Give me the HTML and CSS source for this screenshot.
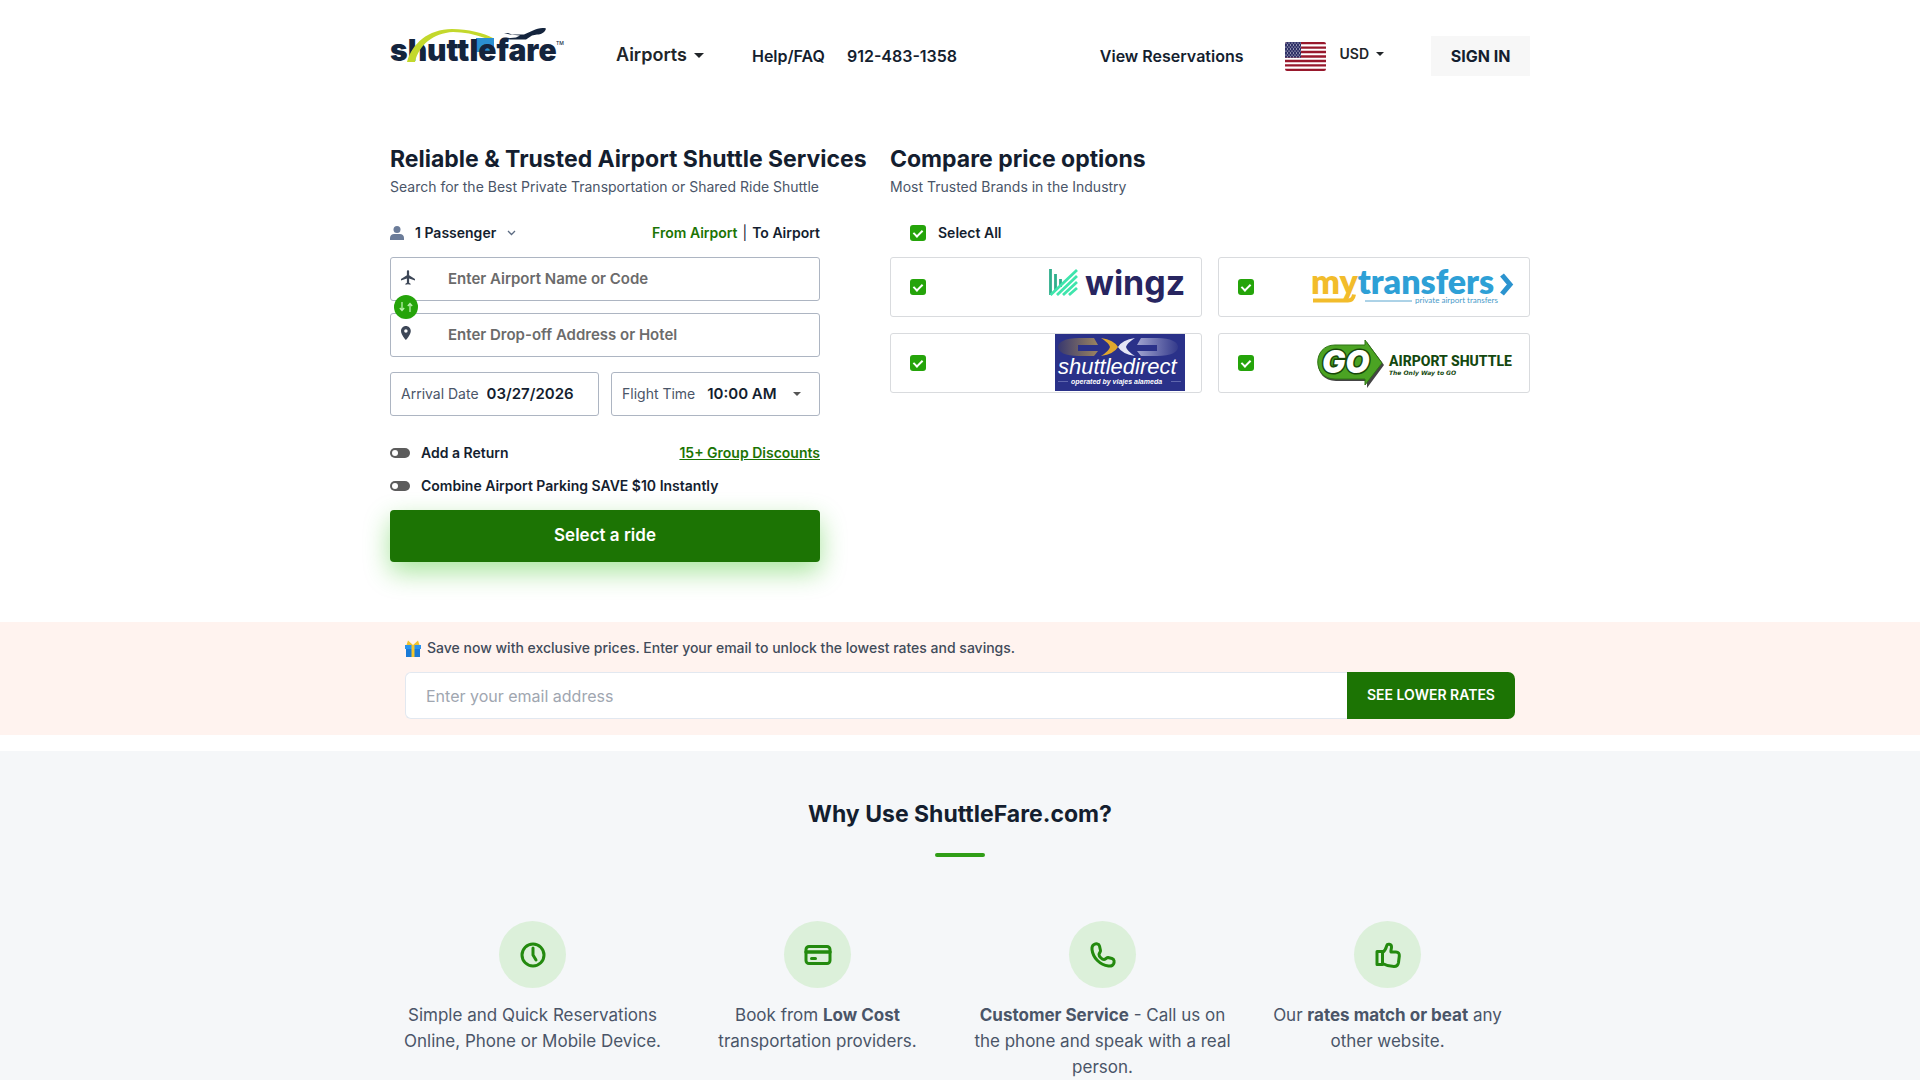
FILE: index.html
```html
<!DOCTYPE html>
<html lang="en">
<head>
<meta charset="utf-8">
<meta name="viewport" content="width=device-width, initial-scale=1">
<title>ShuttleFare - Airport Shuttle Services</title>
<link rel="stylesheet" href="styles.css">
</head>
<body>
<header class="container header">
  <a class="logo" href="#" aria-label="shuttlefare">
    <svg width="176" height="38" viewBox="0 0 176 38">
      <rect x="86" y="10" width="18" height="14" fill="#2b8fd0"/>
      <text class="logo-word" x="0" y="33">shuttlefare</text>
      <path d="M17 34C22 16 38 1 62 1c16 0 32 4 41 9h-8C84 6 74 4 63 4 43 5 29 17 25 34z" fill="#c3d82c"/>
      <path d="M114 5l4 0 4 1.500 12 0 9-4c4-2 9-3 13-2-1 4-5 6-9 6l-5 1-6 4h-16l-4-1 10-1 4-2-10-1z" fill="#14243d"/>
      <text class="logo-tm" x="166" y="17">TM</text>
    </svg>
  </a>
  <nav class="nav">
    <button class="menu menu-lg" type="button">Airports <span class="caret"></span></button>
    <a class="nav-link help" href="#">Help/FAQ</a>
    <a class="nav-link" href="#">912-483-1358</a>
  </nav>
  <div class="account">
    <a class="nav-link" href="#">View Reservations</a>
    <div class="currency">
      <svg width="41" height="29" viewBox="0 0 41 29" aria-hidden="true">
        <defs>
          <clipPath id="flag-clip"><rect width="41" height="29" rx="2"/></clipPath>
          <pattern id="stars" width="3" height="4" patternUnits="userSpaceOnUse"><circle cx="1" cy="1" r=".6" fill="#fff"/><circle cx="2.5" cy="3" r=".6" fill="#fff"/></pattern>
        </defs>
        <g clip-path="url(#flag-clip)">
          <rect width="41" height="29" fill="#fff"/>
          <path d="M0 1.1h41M0 5.6h41M0 10h41M0 14.5h41M0 19h41M0 23.4h41M0 27.9h41" stroke="#98182c" stroke-width="2.4"/>
          <rect width="16" height="15.6" fill="#2d2f66"/><rect width="16" height="15.6" fill="url(#stars)"/>
        </g>
      </svg>
      <button class="menu menu-sm" type="button">USD <span class="caret caret-sm"></span></button>
    </div>
    <button class="sign-in" type="button">SIGN IN</button>
  </div>
</header>

<main>
  <div class="container booking">
    <section>
      <h1 class="title">Reliable &amp; Trusted Airport Shuttle Services</h1>
      <p class="subtitle">Search for the Best Private Transportation or Shared Ride Shuttle</p>
      <form class="search">
        <div class="row">
          <button class="passengers" type="button">
            <svg width="14" height="14" viewBox="0 0 14 14" fill="#6b7c99"><circle cx="7" cy="3.5" r="3.5"/><path d="M0 14v-2c0-2.500 2-4 4-4h6c2 0 4 1.500 4 4v2z"/></svg>
            1 Passenger
            <svg width="9" height="6" viewBox="0 0 9 6" fill="none" stroke="#5c6b82" stroke-width="1.3"><path d="M1 1l3.500 3.500L8 1"/></svg>
          </button>
          <div class="direction">
            <button class="tab tab-on" type="button">From Airport</button>
            <span>|</span>
            <button class="tab" type="button">To Airport</button>
          </div>
        </div>
        <div class="places">
          <label class="field">
            <svg class="field-icon" width="14" height="15" viewBox="2 2 19 20" fill="#3d4757"><path d="M21 16v-2l-8-5V3.500c0-.83-.67-1.500-1.500-1.500S10 2.670 10 3.500V9l-8 5v2l8-2.500V19l-2 1.500V22l3.500-1 3.500 1v-1.500L13 19v-5.500z"/></svg>
            <input class="field-input" type="text" aria-label="Airport" placeholder="Enter Airport Name or Code">
          </label>
          <label class="field">
            <svg class="field-icon" width="14" height="14" viewBox="5 2 20 20" fill="#3d4757"><path fill-rule="evenodd" d="M12 2C8.130 2 5 5.130 5 9c0 5.250 7 13 7 13s7-7.750 7-13c0-3.870-3.130-7-7-7zm0 9.500a2.500 2.500 0 1 1 0-5 2.500 2.500 0 0 1 0 5z"/></svg>
            <input class="field-input" type="text" aria-label="Drop-off" placeholder="Enter Drop-off Address or Hotel">
          </label>
          <button class="swap" type="button" aria-label="Swap">
            <svg width="14" height="10" viewBox="0 0 14 10" fill="none" stroke="#b9f0ac" stroke-width="1.300"><path d="M3 0v8M0.800 6L3 8.500 5.200 6" /><path d="M11 10V2M8.800 4L11 1.500 13.200 4"/></svg>
          </button>
        </div>
        <div class="when">
          <label class="field when-field"><span class="field-label">Arrival Date</span><input class="value" type="text" value="03/27/2026"></label>
          <label class="field when-field"><span class="field-label time-label">Flight Time</span><select class="value"><option>10:00 AM</option></select><span class="caret caret-xs"></span></label>
        </div>
        <div class="extras">
          <div class="row">
            <label class="switch-label"><input class="switch" type="checkbox">Add a Return</label>
            <a class="discounts" href="#">15+ Group Discounts</a>
          </div>
          <label class="switch-label"><input class="switch" type="checkbox">Combine Airport Parking SAVE $10 Instantly</label>
        </div>
        <button class="submit" type="submit">Select a ride</button>
      </form>
    </section>

    <section>
      <h2 class="title">Compare price options</h2>
      <p class="subtitle">Most Trusted Brands in the Industry</p>
      <label class="select-all"><input class="check" type="checkbox" checked>Select All</label>
      <div class="brands">
        <label class="brand">
          <input class="check" type="checkbox" checked aria-label="wingz">
          <svg width="204" height="58" viewBox="0 0 204 58">
            <g stroke-width="2.800" fill="none"><path d="M69.500 11v26M74.500 16v17M79.500 21v8" stroke="#2fae8c"/><path d="M69.500 37L96 12M76 37l20-19M82 37l14-13M88 37l8-7" stroke="#3fe5ac"/></g>
            <text class="wingz" x="104" y="37">wingz</text>
          </svg>
        </label>
        <label class="brand">
          <input class="check" type="checkbox" checked aria-label="mytransfers">
          <svg width="204" height="58" viewBox="0 0 204 58">
            <text class="mytransfers" x="2" y="36"><tspan fill="#f2bc2b">my</tspan><tspan fill="#2ea0d6">transfers</tspan></text>
            <path d="M4 42.500h35q5 0 6-6" fill="none" stroke="#f2bc2b" stroke-width="4"/>
            <path d="M193 17l8 9.500-8 9.500" fill="none" stroke="#2b93cf" stroke-width="5"/>
            <path d="M56 43h47" stroke="#5aa6cf"/>
            <text class="my-tag" x="106" y="45">private airport transfers</text>
          </svg>
        </label>
        <label class="brand">
          <input class="check" type="checkbox" checked aria-label="shuttledirect">
          <svg width="204" height="58" viewBox="0 0 204 58">
            <defs>
              <linearGradient id="bronze"><stop offset="0" stop-color="#38386f"/><stop offset="1" stop-color="#9b8460"/></linearGradient>
              <linearGradient id="steel"><stop offset="0" stop-color="#a0a3cf"/><stop offset="1" stop-color="#343a8b"/></linearGradient>
            </defs>
            <rect x="74" width="130" height="57" fill="#2a3189"/>
            <path d="M113 4H98C84 4 77 8 77 13s7 9 21 9h15l4-5H97v-6h20z" fill="url(#bronze)"/>
            <path d="M160 4h16c14 0 21 4 21 9s-7 9-21 9h-16l-4-5h20v-6h-20z" fill="url(#steel)"/>
            <path d="M120 4q13 2 17 9-4 7-17 9 8-5 9-9-1-4-9-9z" fill="#e0a72e"/><path d="M154 4q-13 2-17 9 4 7 17 9-8-5-9-9 1-4 9-9z" fill="#e4e5f5"/>
            <text class="sd-name" x="77" y="40">shuttledirect</text>
            <text class="sd-tag" x="90" y="50">operated by viajes alameda</text>
            <path d="M77 47.500h10M190 47.500h10" stroke="#6067ad"/>
          </svg>
        </label>
        <label class="brand">
          <input class="check" type="checkbox" checked aria-label="GO Airport Shuttle">
          <svg width="204" height="58" viewBox="0 0 204 58">
            <path d="M27 13C3 13 3 47 27 47h31v7l17-23L58 8v5z" fill="#444"/>
            <path d="M26 11C3 11 3 45 26 45h30v6l17-22L56 6v5z" fill="#4ba323" stroke="#2f7415"/>
            <text class="go" x="13" y="39">GO</text>
            <text class="go-name" x="80" y="32">AIRPORT SHUTTLE</text>
            <text class="go-tag" x="80" y="41">The Only Way to GO</text>
          </svg>
        </label>
      </div>
    </section>
  </div>

  <section class="offer">
    <form class="container offer-form">
      <label class="offer-label" for="email">
        <svg width="16" height="17" viewBox="0 0 16 17"><path d="M1 5h14v12H1z" fill="#1a7ad6"/><path d="M0 5h16v4H0z" fill="#2a93ee"/><path d="M6.500 5h3v12h-3z" fill="#f3c62e"/><path d="M8 5L1.500 5 3 .5zM8 5h6.500L13 .5z" fill="#f0c22e"/></svg>
        Save now with exclusive prices. Enter your email to unlock the lowest rates and savings.
      </label>
      <div class="offer-row">
        <input class="email" id="email" type="email" placeholder="Enter your email address">
        <button class="rates" type="submit">SEE LOWER RATES</button>
      </div>
    </form>
  </section>

  <section class="why">
    <h2 class="title why-title">Why Use ShuttleFare.com?</h2>
    <ul class="container reasons">
      <li class="reason">
        <span class="badge"><svg width="28" height="28" viewBox="0 0 28 28"><circle cx="14" cy="14" r="11"/><path d="M14 7v7l3 5"/></svg></span>
        <p class="reason-text">Simple and Quick Reservations Online, Phone or Mobile Device.</p>
      </li>
      <li class="reason">
        <span class="badge"><svg width="28" height="28" viewBox="0 0 28 28"><rect x="2" y="5.500" width="24" height="17" rx="3"/><path d="M2 11h24" stroke-width="3.500"/><path d="M7.500 17.500h4"/></svg></span>
        <p class="reason-text">Book from <b>Low Cost</b> transportation providers.</p>
      </li>
      <li class="reason">
        <span class="badge"><svg width="28" height="28" viewBox="0 0 28 28"><path d="M5 3.500C7 2.500 10 2.500 10.500 5l1 4.500c.3 1.500-1.500 2.500-1.500 4 0 2 3 5 5 5 1.500 0 2.500-2 4-2l4 1c2.500.7 2.500 3.500 1.500 5.500-1 1.800-3 2.300-5 2C11 24 4 17 3 8.500c-.2-2 .3-4 2-5z"/></svg></span>
        <p class="reason-text"><b>Customer Service</b> - Call us on the phone and speak with a real person.</p>
      </li>
      <li class="reason">
        <span class="badge"><svg width="28" height="28" viewBox="0 0 28 28"><path d="M3 10.500h5.500v13H3zM8.500 11.500c3-2 3.500-4 4.300-7 .4-1.600 4.700-2 4.700 1.500 0 2-1 3.500-.5 5h5c2.500 0 3.500 1.500 3.300 4l-.8 6.500c-.4 2.500-1.800 4-4.500 4-4 0-8-1-11.500-3"/></svg></span>
        <p class="reason-text">Our <b>rates match or beat</b> any other website.</p>
      </li>
    </ul>
  </section>
</main>
</body>
</html>
```
FILE: styles.css
```css
* { box-sizing: border-box; }
body {
  margin: 0;
  min-height: 100vh;
  display: flex;
  flex-direction: column;
  background: #fff;
  color: #141e2f;
  font: 14px/20px Inter, "Liberation Sans", sans-serif;
}
main { flex: 1; display: flex; flex-direction: column; }
button, input, select { font: inherit; color: inherit; margin: 0; }
button { border: 0; padding: 0; background: none; cursor: pointer; }
a { color: inherit; text-decoration: none; }
svg { display: block; flex: none; overflow: visible; }
.container { width: 100%; max-width: 1140px; margin: 0 auto; }

.header { display: flex; align-items: center; padding-top: 36px; }
.logo { width: 176px; margin-right: 50px; align-self: flex-start; margin-top: -8px; }
.logo-word { font: 900 30px Inter, sans-serif; fill: #14243d; }
.logo-tm { font: 500 5px Inter, sans-serif; fill: #14243d; }
.nav { display: flex; align-items: center; gap: 22px; }
.menu { display: flex; align-items: center; color: #212529; font-weight: 600; }
.menu-lg { gap: 7px; font-size: 18px; padding-bottom: 2px; }
.menu-sm { gap: 7px; padding-bottom: 4px; }
.help { margin-left: 26px; }
.caret { border: 5px solid transparent; border-top-color: currentColor; border-bottom: 0; }
.caret-sm { border-width: 4px 4px 0; }
.caret-xs { border-width: 4px 4px 0; color: #555; }
.nav-link { font-size: 16px; font-weight: 600; }
.account { display: flex; align-items: center; margin-left: auto; }
.currency { display: flex; align-items: center; gap: 13px; margin: 0 47px 0 42px; }
.sign-in { width: 99px; height: 40px; background: #f7f7f7; font-size: 16px; font-weight: 700; }

.booking { display: grid; grid-template-columns: 500fr 640fr; padding: 68px 0 60px; }
.title { margin: 0; font-size: 23px; line-height: 30px; font-weight: 700; white-space: nowrap; }
.subtitle { margin: 3px 0 26px; color: #4a5568; }
.search { max-width: 430px; }
.row { display: flex; justify-content: space-between; align-items: center; }
.passengers { display: flex; align-items: center; gap: 11px; font-weight: 600; }
.direction { display: flex; gap: 5px; }
.tab { font-weight: 600; }
.tab-on { color: #1c7404; }
.places { position: relative; display: grid; gap: 12px; margin: 14px 0 15px; }
.field { display: flex; align-items: center; height: 44px; min-width: 0; padding: 0 10px; border: 1px solid #adb5c2; border-radius: 3px; }
.field-icon { margin-bottom: 4px; }
.field-input { flex: 1; min-width: 0; margin-left: 33px; padding: 0; border: 0; outline: 0; background: none; font-size: 15px; font-weight: 600; }
.field-input::placeholder { color: #6b6b6b; opacity: 1; }
.swap { position: absolute; left: 4px; top: 38px; width: 24px; height: 24px; border-radius: 50%; background: #25a40a; display: grid; place-items: center; }
.when { display: grid; grid-template-columns: repeat(2, minmax(0, 1fr)); gap: 12px; }
.when-field { gap: 8px; }
.field-label { color: #4a5568; white-space: nowrap; }
.time-label { margin-right: 4px; }
.value { flex: 1; min-width: 0; width: 0; padding: 0; border: 0; outline: 0; background: none; appearance: none; font-size: 15px; font-weight: 600; }
.when-field .caret { margin-right: 8px; }
.extras { display: grid; gap: 13px; margin: 27px 0 14px; }
.switch-label { display: flex; align-items: center; gap: 11px; font-weight: 600; }
.switch { appearance: none; width: 20px; height: 10px; padding: 2px; border-radius: 5px; background: #5c5c5c; display: flex; }
.switch::before { content: ""; width: 6px; height: 6px; border-radius: 50%; background: #fff; }
.switch:checked { justify-content: flex-end; background: #25a40a; }
.discounts { color: #1c7404; font-weight: 600; text-decoration: underline; }
.submit { display: block; width: 100%; height: 52px; padding-bottom: 2px; border-radius: 4px; background: #1c7404; color: #fff; font-size: 17px; font-weight: 600; box-shadow: 0 10px 26px rgba(37, 190, 10, .4); }

.select-all { display: flex; align-items: center; gap: 12px; padding-left: 20px; font-weight: 600; }
.check { appearance: none; width: 16px; height: 16px; border-radius: 3px; background: #25a40a; display: grid; justify-content: center; padding-top: 3px; }
.check::before { content: ""; width: 4px; height: 7px; border: solid #fff; border-width: 0 2px 2px 0; transform: rotate(45deg); }
.check:not(:checked)::before { visibility: hidden; }
.brands { display: grid; grid-template-columns: 1fr 1fr; gap: 16px; margin-top: 14px; }
.brand { display: flex; justify-content: space-between; align-items: center; height: 60px; padding: 0 16px 0 19px; border: 1px solid #d9dbde; border-radius: 3px; }
.wingz { font: 700 34px Inter, sans-serif; fill: #282560; }
.mytransfers { font: 800 34px Lato, sans-serif; }
.my-tag { font: 400 8px Lato, sans-serif; fill: #4a9bc9; }
.sd-name { font: italic 400 22px "Liberation Sans", sans-serif; fill: #fff; }
.sd-tag { font: italic 700 7px "Liberation Sans", sans-serif; fill: #fff; }
.go { font: italic 900 31px Inter, sans-serif; fill: #fff; stroke: #17470a; stroke-width: 3; paint-order: stroke; }
.go-name { font: 800 14px Roboto, sans-serif; fill: #14480f; }
.go-tag { font: italic 700 6px "DejaVu Sans", sans-serif; fill: #14480f; }

.offer { background: #fff3ef; padding: 16px 0; }
.offer-form { padding: 0 15px; }
.offer-label { display: flex; align-items: center; gap: 6px; margin-bottom: 14px; color: #414b5a; font-weight: 500; }
.offer-row { display: flex; }
.email { flex: 1; min-width: 0; height: 47px; padding: 0 20px; border: 1px solid #e2e8f0; border-right: 0; border-radius: 6px 0 0 6px; background: #fff; outline: 0; font-size: 16px; }
.email::placeholder { color: #a0a6b0; opacity: 1; }
.rates { width: 168px; padding-bottom: 2px; border-radius: 0 7px 7px 0; background: #1c7404; color: #fff; font-weight: 600; }

.why { flex: 1; margin-top: 16px; padding-top: 48px; background: #f5f7f9; }
.why-title { text-align: center; }
.why-title::after { content: ""; display: block; width: 50px; height: 4px; margin: 24px auto 64px; border-radius: 2px; background: #309e17; }
.reasons { display: grid; grid-template-columns: repeat(4, 1fr); padding: 0; list-style: none; }
.reason { display: flex; flex-direction: column; align-items: center; gap: 14px; padding: 0 12px; }
.badge { display: grid; place-items: center; width: 67px; height: 67px; border-radius: 50%; background: #dcf0da; }
.badge svg { fill: none; stroke: #238a0e; stroke-width: 3; stroke-linejoin: round; stroke-linecap: round; }
.reason-text { margin: 0; color: #4a5568; font-size: 17px; line-height: 26px; text-align: center; }
```
